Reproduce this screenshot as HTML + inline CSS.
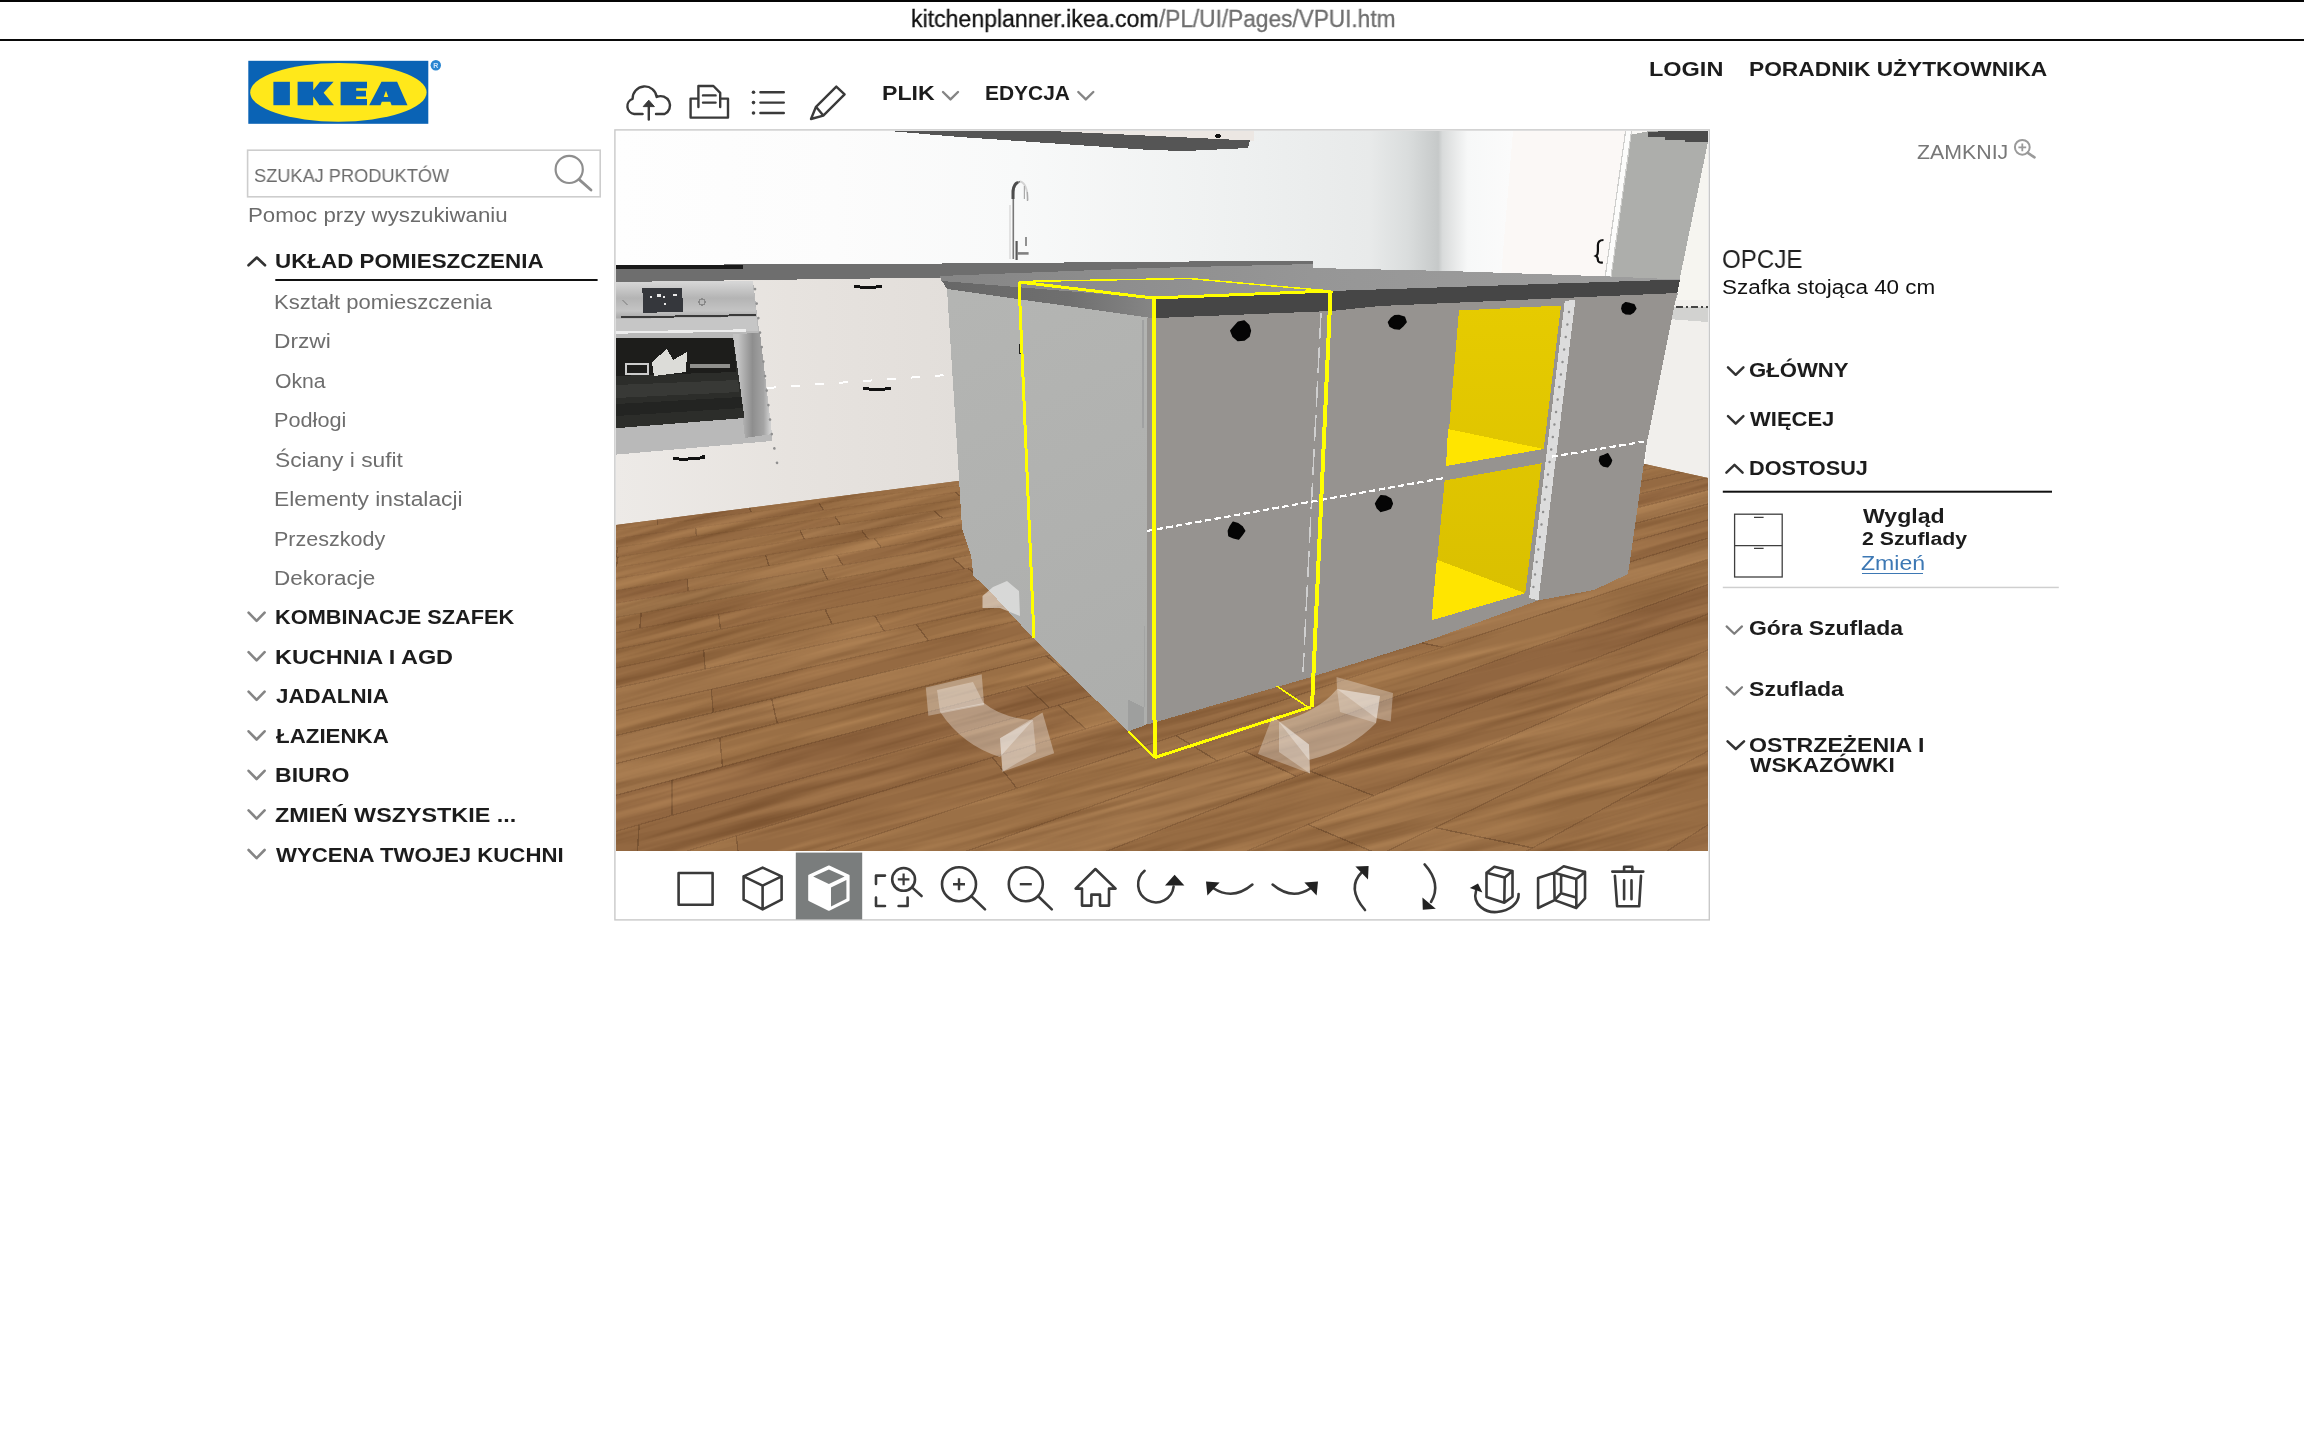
<!DOCTYPE html>
<html lang="pl"><head><meta charset="utf-8"><title>IKEA Home Planner</title>
<style>
html,body{margin:0;padding:0;background:#fff;}
body{width:2304px;height:1440px;position:relative;overflow:hidden;font-family:"Liberation Sans",sans-serif;}
.t{position:absolute;white-space:nowrap;line-height:1;transform-origin:0 0;display:block;will-change:transform;}
.abs{position:absolute;}
</style></head><body>

<div class="abs" style="left:0;top:0;width:2304px;height:1.9px;background:#050505"></div>
<div class="abs" style="left:0;top:39.4px;width:2304px;height:2px;background:#0a0a0a"></div>
<span class="t" style="left:910.8px;top:7.60px;font-size:23.5px;color:#111;-webkit-text-stroke:.3px #111;transform:scaleX(0.9819)">kitchenplanner.ikea.com</span>
<span class="t" style="left:1159.4px;top:7.60px;font-size:23.5px;color:#6e6e6e;-webkit-text-stroke:.3px #6e6e6e;transform:scaleX(0.9631)">/PL/UI/Pages/VPUI.htm</span>
<svg class="abs" style="left:0;top:0" width="2304" height="1440" viewBox="0 0 2304 1440">
<rect x="248.3" y="60.8" width="180" height="63" fill="#0a63b5"/>
<ellipse cx="338.4" cy="92.4" rx="88.2" ry="29.3" fill="#ffe81a"/>
<g fill="#0a63b5"><rect x="273.4" y="81.8" width="16.5" height="23.4"/><path d="M297.6,81.8 h15.6 v8.4 l6.8,-8.4 h13.6 l-10,11 l10.4,12.4 h-14.6 l-6.2,-8.6 v8.6 h-15.6 z"/><path d="M340.6,81.8 h26.4 v6.4 h-10.8 v2.6 h9.8 v5.6 h-9.8 v2.6 h10.8 v6.2 h-26.4 z"/><path d="M381.5,81.8 h15.6 l10.4,23.4 h-15.9 l-1.3,-3.4 h-8.5 l-1.3,3.4 h-11.3 z M386,90.8 l-2.3,6.2 h4.6 z"/></g>
<circle cx="435.8" cy="65.3" r="5.2" fill="#2a86d1"/><text x="435.8" y="68" font-size="7" text-anchor="middle" fill="#cfe6fa" font-family="Liberation Sans" font-weight="700">R</text>
<rect x="247.6" y="150.2" width="352.6" height="46.6" fill="#fff" stroke="#cdcdcd" stroke-width="1.6"/>
<circle cx="569.2" cy="169.4" r="13.6" fill="none" stroke="#8e8e8e" stroke-width="2.2"/><path d="M579,179.4 L591,190" stroke="#8e8e8e" stroke-width="2.8" stroke-linecap="round"/>
<path d="M248.5,265.3 L256.8,257.5 L265.0,265.3" fill="none" stroke="#333" stroke-width="2.6" stroke-linecap="round" stroke-linejoin="round"/>
<rect x="275.3" y="279" width="322.3" height="2" fill="#111"/>
<path d="M248.6,612.7 L256.6,620.9 L264.6,612.7" fill="none" stroke="#858585" stroke-width="2.6" stroke-linecap="round" stroke-linejoin="round"/>
<path d="M248.6,652.2 L256.6,660.4 L264.6,652.2" fill="none" stroke="#858585" stroke-width="2.6" stroke-linecap="round" stroke-linejoin="round"/>
<path d="M248.6,691.7 L256.6,699.9 L264.6,691.7" fill="none" stroke="#858585" stroke-width="2.6" stroke-linecap="round" stroke-linejoin="round"/>
<path d="M248.6,731.3 L256.6,739.5 L264.6,731.3" fill="none" stroke="#858585" stroke-width="2.6" stroke-linecap="round" stroke-linejoin="round"/>
<path d="M248.6,770.8 L256.6,779.0 L264.6,770.8" fill="none" stroke="#858585" stroke-width="2.6" stroke-linecap="round" stroke-linejoin="round"/>
<path d="M248.6,810.4 L256.6,818.6 L264.6,810.4" fill="none" stroke="#858585" stroke-width="2.6" stroke-linecap="round" stroke-linejoin="round"/>
<path d="M248.6,850.0 L256.6,858.2 L264.6,850.0" fill="none" stroke="#858585" stroke-width="2.6" stroke-linecap="round" stroke-linejoin="round"/>
<path d="M943.0,92.0 L950.5,99.4 L958.0,92.0" fill="none" stroke="#858585" stroke-width="2.4" stroke-linecap="round" stroke-linejoin="round"/>
<path d="M1078.3,92.0 L1085.8,99.4 L1093.3,92.0" fill="none" stroke="#858585" stroke-width="2.4" stroke-linecap="round" stroke-linejoin="round"/>
<path stroke="#3a3a3a" fill="none" stroke-width="2.4" stroke-linecap="round" stroke-linejoin="round" d="M642.6,114 H634.2 A7.8,7.8 0 0 1 632.6,98.9 A12.1,12.1 0 0 1 656.7,97 A8.6,8.6 0 0 1 664.6,114 H656"/>
<path stroke="#3a3a3a" fill="none" stroke-width="2.4" stroke-linecap="round" stroke-linejoin="round" d="M648.8,119.6 V103"/><path d="M643.2,106.6 L648.8,100.2 L654.4,106.6 Z" fill="#3a3a3a" stroke="#3a3a3a" stroke-width="1" stroke-linejoin="round"/>
<path stroke="#3a3a3a" fill="none" stroke-width="2.4" stroke-linecap="round" stroke-linejoin="round" d="M698.4,107 V86 h15 l6.8,6.8 V107 M690.6,98.6 h7.8 M720.2,98.6 h7.8 V117.6 H690.6 V98.6 M703,95.4 h12.6 M703,102.6 h12.6"/>
<path stroke="#3a3a3a" fill="none" stroke-width="2.4" stroke-linecap="round" stroke-linejoin="round" d="M760.4,92.2 h23.4 M760.4,102.6 h23.4 M760.4,113 h23.4"/>
<g fill="#3a3a3a"><circle cx="753.5" cy="92.2" r="1.8"/><circle cx="753.5" cy="102.6" r="1.8"/><circle cx="753.5" cy="113" r="1.8"/></g>
<path stroke="#3a3a3a" fill="none" stroke-width="2.4" stroke-linecap="round" stroke-linejoin="round" d="M836.3,86.6 L844.6,94.4 L823.3,115.6 L811,119 L816,106.8 Z M816,106.8 L823.3,115.6"/>
<circle cx="2022.3" cy="147.3" r="7.4" fill="none" stroke="#9a9a9a" stroke-width="2"/><path d="M2027.8,152.8 L2034.5,157.3" stroke="#9a9a9a" stroke-width="2.6" stroke-linecap="round"/><path d="M2018.4,147.3 h7.8 M2022.3,143.4 v7.8" stroke="#9a9a9a" stroke-width="1.8"/>
<path d="M1728.0,367.4 L1735.7,374.8 L1743.4,367.4" fill="none" stroke="#333" stroke-width="2.5" stroke-linecap="round" stroke-linejoin="round"/>
<path d="M1728.0,416.2 L1735.7,423.6 L1743.4,416.2" fill="none" stroke="#333" stroke-width="2.5" stroke-linecap="round" stroke-linejoin="round"/>
<path d="M1726.4,472.6 L1734.5,464.8 L1742.6,472.6" fill="none" stroke="#333" stroke-width="2.5" stroke-linecap="round" stroke-linejoin="round"/>
<rect x="1722.8" y="490.7" width="329.2" height="2" fill="#111"/>
<rect x="1722.8" y="586.7" width="336" height="1.5" fill="#cfcfcf"/>
<g stroke="#3f3f3f" fill="none" stroke-width="1.3"><rect x="1734.6" y="514.2" width="47.6" height="62.8"/><path d="M1734.6,545.6 h47.6 M1754,517.3 h9.6 M1754,548.4 h9.6"/></g>
<path d="M1726.6,626.4 L1734.3,633.8 L1742.0,626.4" fill="none" stroke="#7d7d7d" stroke-width="2.2" stroke-linecap="round" stroke-linejoin="round"/>
<path d="M1726.6,687.2 L1734.3,694.6 L1742.0,687.2" fill="none" stroke="#7d7d7d" stroke-width="2.2" stroke-linecap="round" stroke-linejoin="round"/>
<path d="M1727.6,741.4 L1735.8,749.0 L1744.0,741.4" fill="none" stroke="#333" stroke-width="2.6" stroke-linecap="round" stroke-linejoin="round"/>
<rect x="614.9" y="129.9" width="1094.4" height="790" fill="#fff" stroke="#c9c9c9" stroke-width="1.4"/>
</svg>
<span class="t" style="left:253.7px;top:166.11px;font-size:19.0px;font-weight:400;color:#6b6b6b;transform:scaleX(0.9581);">SZUKAJ PRODUKTÓW</span>
<span class="t" style="left:247.5px;top:204.77px;font-size:20.0px;font-weight:400;color:#6b6b6b;transform:scaleX(1.1122);">Pomoc przy wyszukiwaniu</span>
<span class="t" style="left:275.2px;top:251.99px;font-size:19.5px;font-weight:700;color:#1c1c1c;transform:scaleX(1.1476);">UKŁAD POMIESZCZENIA</span>
<span class="t" style="left:274.0px;top:291.57px;font-size:20.0px;font-weight:400;color:#6e6e6e;transform:scaleX(1.1020);">Kształt pomieszczenia</span>
<span class="t" style="left:273.9px;top:331.07px;font-size:20.0px;font-weight:400;color:#6e6e6e;transform:scaleX(1.1362);">Drzwi</span>
<span class="t" style="left:275.1px;top:370.57px;font-size:20.0px;font-weight:400;color:#6e6e6e;transform:scaleX(1.0596);">Okna</span>
<span class="t" style="left:274.0px;top:410.07px;font-size:20.0px;font-weight:400;color:#6e6e6e;transform:scaleX(1.0844);">Podłogi</span>
<span class="t" style="left:275.1px;top:449.57px;font-size:20.0px;font-weight:400;color:#6e6e6e;transform:scaleX(1.1396);">Ściany i sufit</span>
<span class="t" style="left:273.9px;top:489.07px;font-size:20.0px;font-weight:400;color:#6e6e6e;transform:scaleX(1.1387);">Elementy instalacji</span>
<span class="t" style="left:274.0px;top:528.57px;font-size:20.0px;font-weight:400;color:#6e6e6e;transform:scaleX(1.0762);">Przeszkody</span>
<span class="t" style="left:274.0px;top:568.07px;font-size:20.0px;font-weight:400;color:#6e6e6e;transform:scaleX(1.1241);">Dekoracje</span>
<span class="t" style="left:275.1px;top:608.29px;font-size:19.5px;font-weight:700;color:#1c1c1c;transform:scaleX(1.1155);">KOMBINACJE SZAFEK</span>
<span class="t" style="left:275.0px;top:647.79px;font-size:19.5px;font-weight:700;color:#1c1c1c;transform:scaleX(1.2027);">KUCHNIA I AGD</span>
<span class="t" style="left:276.2px;top:687.29px;font-size:19.5px;font-weight:700;color:#1c1c1c;transform:scaleX(1.1449);">JADALNIA</span>
<span class="t" style="left:276.2px;top:726.89px;font-size:19.5px;font-weight:700;color:#1c1c1c;transform:scaleX(1.1449);">ŁAZIENKA</span>
<span class="t" style="left:275.0px;top:766.39px;font-size:19.5px;font-weight:700;color:#1c1c1c;transform:scaleX(1.1836);">BIURO</span>
<span class="t" style="left:275.0px;top:805.99px;font-size:19.5px;font-weight:700;color:#1c1c1c;transform:scaleX(1.1970);">ZMIEŃ WSZYSTKIE ...</span>
<span class="t" style="left:276.2px;top:845.59px;font-size:19.5px;font-weight:700;color:#1c1c1c;transform:scaleX(1.1377);">WYCENA TWOJEJ KUCHNI</span>
<span class="t" style="left:881.8px;top:84.39px;font-size:19.5px;font-weight:700;color:#1c1c1c;transform:scaleX(1.1860);">PLIK</span>
<span class="t" style="left:985.1px;top:84.39px;font-size:19.5px;font-weight:700;color:#1c1c1c;transform:scaleX(1.0744);">EDYCJA</span>
<span class="t" style="left:1648.8px;top:59.07px;font-size:20.0px;font-weight:700;color:#1c1c1c;transform:scaleX(1.1738);">LOGIN</span>
<span class="t" style="left:1749.4px;top:59.07px;font-size:20.0px;font-weight:700;color:#1c1c1c;transform:scaleX(1.1375);">PORADNIK UŻYTKOWNIKA</span>
<span class="t" style="left:1916.6px;top:143.39px;font-size:19.5px;font-weight:400;color:#777;transform:scaleX(1.0938);">ZAMKNIJ</span>
<span class="t" style="left:1722.3px;top:246.61px;font-size:25.5px;font-weight:400;color:#1f1f1f;transform:scaleX(0.9470);">OPCJE</span>
<span class="t" style="left:1722.1px;top:276.57px;font-size:20.0px;font-weight:400;color:#111;transform:scaleX(1.1218);">Szafka stojąca 40 cm</span>
<span class="t" style="left:1749.3px;top:361.29px;font-size:19.5px;font-weight:700;color:#1c1c1c;transform:scaleX(1.1349);">GŁÓWNY</span>
<span class="t" style="left:1750.4px;top:410.09px;font-size:19.5px;font-weight:700;color:#1c1c1c;transform:scaleX(1.1284);">WIĘCEJ</span>
<span class="t" style="left:1749.3px;top:458.59px;font-size:19.5px;font-weight:700;color:#1c1c1c;transform:scaleX(1.1124);">DOSTOSUJ</span>
<span class="t" style="left:1862.7px;top:507.39px;font-size:19.5px;font-weight:700;color:#1c1c1c;transform:scaleX(1.1824);">Wygląd</span>
<span class="t" style="left:1861.5px;top:530.78px;font-size:17.5px;font-weight:700;color:#1c1c1c;transform:scaleX(1.2141);">2 Szuflady</span>
<span class="t" style="left:1860.5px;top:554.09px;font-size:19.5px;font-weight:400;color:#3d78b4;transform:scaleX(1.1827);">Zmień</span>
<span class="t" style="left:1749.1px;top:619.19px;font-size:19.5px;font-weight:700;color:#1c1c1c;transform:scaleX(1.1754);">Góra Szuflada</span>
<span class="t" style="left:1749.1px;top:679.99px;font-size:19.5px;font-weight:700;color:#1c1c1c;transform:scaleX(1.1835);">Szuflada</span>
<span class="t" style="left:1749.1px;top:735.89px;font-size:19.5px;font-weight:700;color:#1c1c1c;transform:scaleX(1.1870);">OSTRZEŻENIA I</span>
<span class="t" style="left:1750.3px;top:755.79px;font-size:19.5px;font-weight:700;color:#1c1c1c;transform:scaleX(1.1621);">WSKAZÓWKI</span>
<div class="abs" style="left:1861.7px;top:573px;width:61.5px;height:1.4px;background:#3d78b4"></div>
<svg style="position:absolute;left:616px;top:131px" width="1092" height="720" viewBox="616 131 1092 720" shape-rendering="crispEdges">
<defs>
<linearGradient id="wallg" x1="616" y1="0" x2="1708" y2="0" gradientUnits="userSpaceOnUse">
<stop offset="0" stop-color="#fefefe"/><stop offset=".2" stop-color="#fcfcfc"/><stop offset=".37" stop-color="#f8f9f9"/><stop offset=".535" stop-color="#f0f2f2"/><stop offset=".69" stop-color="#e8eaea"/><stop offset=".725" stop-color="#dadddd"/><stop offset=".753" stop-color="#c6c9c9"/><stop offset=".757" stop-color="#d9dbdb"/><stop offset=".78" stop-color="#f7f8f8"/><stop offset=".82" stop-color="#fbfbfb"/><stop offset="1" stop-color="#f8f6f2"/></linearGradient>
<linearGradient id="cabg" x1="616" y1="0" x2="960" y2="0" gradientUnits="userSpaceOnUse"><stop offset="0" stop-color="#edeae7"/><stop offset=".5" stop-color="#e7e3df"/><stop offset="1" stop-color="#e2deda"/></linearGradient>
<linearGradient id="leftface" x1="950" y1="300" x2="1150" y2="700" gradientUnits="userSpaceOnUse"><stop offset="0" stop-color="#b4b5b3"/><stop offset="1" stop-color="#adaeac"/></linearGradient>
<linearGradient id="lband" x1="942" y1="0" x2="1152" y2="0" gradientUnits="userSpaceOnUse"><stop offset="0" stop-color="#676767"/><stop offset=".6" stop-color="#6f6f6f"/><stop offset="1" stop-color="#858585"/></linearGradient>
<linearGradient id="topface" x1="942" y1="0" x2="1680" y2="0" gradientUnits="userSpaceOnUse"><stop offset="0" stop-color="#868686"/><stop offset=".5" stop-color="#969696"/><stop offset="1" stop-color="#9e9e9e"/></linearGradient>
<linearGradient id="ovenp" x1="0" y1="282" x2="0" y2="318" gradientUnits="userSpaceOnUse"><stop offset="0" stop-color="#d6d6d6"/><stop offset=".45" stop-color="#b4b4b4"/><stop offset=".8" stop-color="#c4c4c4"/><stop offset="1" stop-color="#a8a8a8"/></linearGradient>
<linearGradient id="ovenf" x1="738" y1="0" x2="770" y2="0" gradientUnits="userSpaceOnUse"><stop offset="0" stop-color="#c4c4c4"/><stop offset=".45" stop-color="#8e8e8e"/><stop offset=".8" stop-color="#a4a4a4"/><stop offset="1" stop-color="#cfcfcf"/></linearGradient>
<linearGradient id="ydark" x1="0" y1="305" x2="0" y2="620" gradientUnits="userSpaceOnUse"><stop offset="0" stop-color="#e6cb00"/><stop offset="1" stop-color="#d9bf00"/></linearGradient>
<filter id="grainD" x="0" y="0" width="100%" height="100%" color-interpolation-filters="sRGB"><feTurbulence type="fractalNoise" baseFrequency="0.005 0.11" numOctaves="3" seed="4"/><feColorMatrix type="matrix" values="0 0 0 0 0.30  0 0 0 0 0.16  0 0 0 0 0.05  0.75 0 0 0 -0.335"/></filter>
<filter id="grainL" x="0" y="0" width="100%" height="100%" color-interpolation-filters="sRGB"><feTurbulence type="fractalNoise" baseFrequency="0.004 0.09" numOctaves="3" seed="9"/><feColorMatrix type="matrix" values="0 0 0 0 0.86  0 0 0 0 0.66  0 0 0 0 0.44  0 0.75 0 0 -0.34"/></filter>
<clipPath id="floorclip"><polygon points="616,525 958,481 1000,480 1640,463 1708,478 1708,851 616,851"/></clipPath>
</defs>
<rect x="616" y="131" width="1092" height="720" fill="url(#wallg)"/>
<!-- top wall-cabinet strip -->
<polygon points="1000,131 1254,131 1254,141 1000,134" fill="#ece7e3"/>
<polygon points="889,131 1050,131 1250,140.5 1248,148 1186,151 1150,150 960,137" fill="#555"/>
<ellipse cx="1218" cy="136" rx="3" ry="2" fill="#111"/>
<!-- right tall cabinet -->
<polygon points="1513,131 1631.5,131 1611,277 1501,277" fill="#fbf8f6"/>
<polygon points="1631.5,134.5 1650,131 1708,131 1708,141.8 1679.6,279.6 1611,276.7" fill="#adaeab"/>
<polygon points="1625.6,131 1631.5,131 1611,276.7 1605.2,276.7" fill="#fcfcfb"/>
<path d="M1625.6,131 L1605.2,276.7 M1631.5,131 L1611,276.7" stroke="#cfcfcd" stroke-width="1.2" fill="none"/>
<polygon points="1647.5,132.3 1665,131 1708,131 1708,141.8 1685.4,141.8 1685.4,139.6 1665,139.6 1665,137.4 1647.5,137.4" fill="#4b4b4b"/>
<polygon points="1708,141.8 1708,302 1676,302 1679.6,279.6" fill="#f6f5f0"/>
<path d="M1603.5,240 q-6,0 -5.6,6 v5 q0,4 -2,5 q2,1 2,4 q0,3 5,2.5" fill="none" stroke="#111" stroke-width="2.2" shape-rendering="auto"/>
<!-- faucet -->
<g fill="none" shape-rendering="auto">
<path d="M1010,259 V205" stroke="#dcdcdc" stroke-width="1.6"/>
<path d="M1013.3,259 V196 q0,-13 7,-14.5" stroke="#787878" stroke-width="1.6"/>
<path d="M1013,199 V191 q0.6,-7 5,-8.6" stroke="#4d4d4d" stroke-width="3"/>
<path d="M1020,181.5 q7,1 8,19" stroke="#d4d4d4" stroke-width="2"/>
<path d="M1024.4,186 v13 M1027.4,192 v9" stroke="#aaa" stroke-width="1.2"/>
<path d="M1016.6,241 V260" stroke="#5a5a5a" stroke-width="2.2"/>
<path d="M1017,253.4 h11.6" stroke="#808080" stroke-width="2.6"/>
<path d="M1026,237 v9" stroke="#777" stroke-width="1.6"/>
</g>
<!-- white base cabinets -->
<polygon points="616,282 960,276 962,481 616,526" fill="url(#cabg)"/>
<polygon points="1640,300 1708,300 1708,478 1646,465" fill="#f1efec"/>
<polygon points="1668,306.5 1708,306.5 1708,322 1668,319" fill="#d2d2d0"/><polygon points="1668,292.7 1678.1,292.7 1668.6,322 1660,345" fill="#a6a6a4"/>
<!-- oven -->
<polygon points="616,281.3 753,281.3 772,434 772,441 616,454.6" fill="#b9b9b9"/>
<polygon points="616,281.3 752.5,281.3 756.5,316 616,318" fill="url(#ovenp)"/>
<polygon points="642.3,288.5 682.3,287.5 682.8,311.5 643.5,313" fill="#35373c"/>
<g fill="#e8e8e8"><rect x="650" y="296" width="2" height="2"/><rect x="657" y="294" width="4" height="3"/><rect x="663" y="296" width="2" height="2"/><rect x="673" y="294" width="4" height="2"/><rect x="664" y="303" width="2" height="2"/></g>
<circle cx="702" cy="302" r="3" fill="none" stroke="#888" stroke-width="1.2"/>
<path d="M623,300 l4,5" stroke="#999" stroke-width="1.5"/>
<path d="M621,317.5 L756,315" stroke="#3a3a3a" stroke-width="2"/>
<polygon points="616,319 756.5,317 758,331 616,332" fill="#c6c6c6"/>
<path d="M616,332.5 L746,330.5" stroke="#ededed" stroke-width="2.4"/>
<polygon points="733,334 760,333 772,434 745,438" fill="url(#ovenf)"/>
<polygon points="616,338 733.3,338 744.5,418 616,428.2" fill="#2c2d2a"/>
<polygon points="616,338 733.3,338 736.5,372 616,376" fill="#1d1d1b"/>
<polygon points="616,385 738,380 739.5,392 616,398" fill="#383936"/>
<polygon points="616,404 741,397 742.5,408 616,416" fill="#232422"/>
<polygon points="652,362 667,349 673,360 687,352 686,372 654,376" fill="#dcdcd8"/>
<rect x="626" y="364" width="22" height="10" fill="none" stroke="#ccc" stroke-width="1.2"/>
<path d="M690,366 h40" stroke="#8f8f8c" stroke-width="4"/>
<!-- handles -->
<path d="M854,286 q14,3 28,0" stroke="#111" stroke-width="3" fill="none"/>
<path d="M863,388 q14,3 28,0" stroke="#111" stroke-width="3" fill="none"/>
<path d="M673,458.6 q16,1.5 30,-1 v-3" stroke="#111" stroke-width="3" fill="none"/>
<path d="M767,388 L947,375" stroke="#fff" stroke-width="2" stroke-dasharray="9 15"/>
<path d="M755,289 L771.7,434 L779.6,477" stroke="#8f8f8f" stroke-width="2.6" stroke-linecap="round" stroke-dasharray="0.1 14.5" fill="none" shape-rendering="auto"/>
<!-- back counter -->
<polygon points="616,265 942,263.5 1313,260.5 1313,266 1150,270 942,277.5 616,282" fill="#6e6e6e"/>
<rect x="616" y="265.4" width="127" height="3.6" fill="#1a1a1a"/>
<!-- floor -->
<g clip-path="url(#floorclip)">
<rect x="616" y="460" width="1092" height="400" fill="#986d44"/>
<polygon points="480.6,524.0 648.8,503.8 648.1,510.8 475.3,532.1" fill="#9d7248"/>
<line x1="480.6" y1="524.0" x2="475.3" y2="532.1" stroke="#5f3f26" stroke-opacity=".5" stroke-width="1.4"/>
<polygon points="648.8,503.8 873.6,476.9 878.9,482.4 648.1,510.8" fill="#966b43"/>
<line x1="648.8" y1="503.8" x2="648.1" y2="510.8" stroke="#5f3f26" stroke-opacity=".5" stroke-width="1.4"/>
<polygon points="873.6,476.9 1027.3,458.6 1036.6,462.9 878.9,482.4" fill="#916640"/>
<polygon points="1027.3,458.6 1187.6,439.4 1200.9,442.7 1036.6,462.9" fill="#a0754b"/>
<polygon points="431.0,537.5 600.8,516.6 598.7,524.4 424.1,546.5" fill="#9e7349"/>
<line x1="431.0" y1="537.5" x2="424.1" y2="546.5" stroke="#5f3f26" stroke-opacity=".5" stroke-width="1.4"/>
<polygon points="600.8,516.6 826.8,488.8 831.0,494.9 598.7,524.4" fill="#9a6f45"/>
<line x1="600.8" y1="516.6" x2="598.7" y2="524.4" stroke="#5f3f26" stroke-opacity=".5" stroke-width="1.4"/>
<polygon points="826.8,488.8 1011.9,466.0 1021.2,470.7 831.0,494.9" fill="#997047"/>
<line x1="826.8" y1="488.8" x2="831.0" y2="494.9" stroke="#5f3f26" stroke-opacity=".5" stroke-width="1.4"/>
<polygon points="1011.9,466.0 1191.0,443.9 1204.9,447.4 1021.2,470.7" fill="#966b43"/>
<polygon points="414.2,547.8 531.7,532.9 527.6,541.7 406.6,557.5" fill="#976c43"/>
<line x1="414.2" y1="547.8" x2="406.6" y2="557.5" stroke="#5f3f26" stroke-opacity=".5" stroke-width="1.4"/>
<polygon points="531.7,532.9 657.8,516.9 657.3,524.7 527.6,541.7" fill="#966b43"/>
<line x1="531.7" y1="532.9" x2="527.6" y2="541.7" stroke="#5f3f26" stroke-opacity=".5" stroke-width="1.4"/>
<polygon points="657.8,516.9 749.0,505.3 751.1,512.4 657.3,524.7" fill="#916640"/>
<line x1="657.8" y1="516.9" x2="657.3" y2="524.7" stroke="#5f3f26" stroke-opacity=".5" stroke-width="1.4"/>
<polygon points="749.0,505.3 911.7,484.6 918.4,490.4 751.1,512.4" fill="#976c43"/>
<line x1="749.0" y1="505.3" x2="751.1" y2="512.4" stroke="#5f3f26" stroke-opacity=".5" stroke-width="1.4"/>
<polygon points="911.7,484.6 1070.6,464.4 1081.7,469.0 918.4,490.4" fill="#a0754b"/>
<polygon points="1070.6,464.4 1295.8,435.8 1312.9,438.7 1081.7,469.0" fill="#9b7046"/>
<polygon points="561.3,537.2 819.3,503.4 823.6,510.4 557.9,546.3" fill="#966b43"/>
<line x1="561.3" y1="537.2" x2="557.9" y2="546.3" stroke="#5f3f26" stroke-opacity=".5" stroke-width="1.4"/>
<polygon points="819.3,503.4 1051.1,473.1 1062.1,478.1 823.6,510.4" fill="#9b7046"/>
<line x1="819.3" y1="503.4" x2="823.6" y2="510.4" stroke="#5f3f26" stroke-opacity=".5" stroke-width="1.4"/>
<polygon points="1051.1,473.1 1260.4,445.6 1277.3,449.0 1062.1,478.1" fill="#966b43"/>
<polygon points="536.2,549.3 695.7,527.7 696.4,536.2 531.8,559.2" fill="#956a42"/>
<line x1="536.2" y1="549.3" x2="531.8" y2="559.2" stroke="#5f3f26" stroke-opacity=".5" stroke-width="1.4"/>
<polygon points="695.7,527.7 955.5,492.5 964.1,498.7 696.4,536.2" fill="#9b7046"/>
<line x1="695.7" y1="527.7" x2="696.4" y2="536.2" stroke="#5f3f26" stroke-opacity=".5" stroke-width="1.4"/>
<polygon points="955.5,492.5 1196.0,460.0 1211.7,464.1 964.1,498.7" fill="#9b7046"/>
<line x1="955.5" y1="492.5" x2="964.1" y2="498.7" stroke="#5f3f26" stroke-opacity=".5" stroke-width="1.4"/>
<polygon points="1196.0,460.0 1288.1,447.5 1306.3,450.8 1211.7,464.1" fill="#966b43"/>
<polygon points="487.0,565.5 617.8,547.2 616.0,557.1 480.9,576.6" fill="#956a42"/>
<line x1="487.0" y1="565.5" x2="480.9" y2="576.6" stroke="#5f3f26" stroke-opacity=".5" stroke-width="1.4"/>
<polygon points="617.8,547.2 835.0,516.8 840.1,524.6 616.0,557.1" fill="#966b43"/>
<line x1="617.8" y1="547.2" x2="616.0" y2="557.1" stroke="#5f3f26" stroke-opacity=".5" stroke-width="1.4"/>
<polygon points="835.0,516.8 990.9,495.0 1000.9,501.3 840.1,524.6" fill="#9a6f45"/>
<line x1="835.0" y1="516.8" x2="840.1" y2="524.6" stroke="#5f3f26" stroke-opacity=".5" stroke-width="1.4"/>
<polygon points="990.9,495.0 1142.3,473.8 1156.9,478.7 1000.9,501.3" fill="#9a6f45"/>
<line x1="990.9" y1="495.0" x2="1000.9" y2="501.3" stroke="#5f3f26" stroke-opacity=".5" stroke-width="1.4"/>
<polygon points="1142.3,473.8 1240.0,460.1 1257.6,464.1 1156.9,478.7" fill="#916640"/>
<polygon points="1240.0,460.1 1409.5,436.4 1431.9,438.9 1257.6,464.1" fill="#916640"/>
<polygon points="415.2,586.2 618.1,556.8 616.2,567.4 406.4,598.8" fill="#936841"/>
<line x1="415.2" y1="586.2" x2="406.4" y2="598.8" stroke="#5f3f26" stroke-opacity=".5" stroke-width="1.4"/>
<polygon points="618.1,556.8 800.1,530.4 804.3,539.1 616.2,567.4" fill="#9a6f45"/>
<line x1="618.1" y1="556.8" x2="616.2" y2="567.4" stroke="#5f3f26" stroke-opacity=".5" stroke-width="1.4"/>
<polygon points="800.1,530.4 934.0,511.0 942.6,518.3 804.3,539.1" fill="#a0754b"/>
<line x1="800.1" y1="530.4" x2="804.3" y2="539.1" stroke="#5f3f26" stroke-opacity=".5" stroke-width="1.4"/>
<polygon points="934.0,511.0 1169.5,476.9 1185.6,481.9 942.6,518.3" fill="#9e7349"/>
<line x1="934.0" y1="511.0" x2="942.6" y2="518.3" stroke="#5f3f26" stroke-opacity=".5" stroke-width="1.4"/>
<polygon points="1169.5,476.9 1292.3,459.1 1312.2,462.8 1185.6,481.9" fill="#a0754b"/>
<polygon points="1292.3,459.1 1511.6,427.3 1537.9,429.0 1312.2,462.8" fill="#9a6f45"/>
<polygon points="416.1,597.4 594.3,570.6 591.4,582.3 407.0,611.0" fill="#9e7349"/>
<line x1="416.1" y1="597.4" x2="407.0" y2="611.0" stroke="#5f3f26" stroke-opacity=".5" stroke-width="1.4"/>
<polygon points="594.3,570.6 861.8,530.5 868.2,539.2 591.4,582.3" fill="#986d44"/>
<line x1="594.3" y1="570.6" x2="591.4" y2="582.3" stroke="#5f3f26" stroke-opacity=".5" stroke-width="1.4"/>
<polygon points="861.8,530.5 1088.1,496.5 1102.2,502.7 868.2,539.2" fill="#a0754b"/>
<line x1="861.8" y1="530.5" x2="868.2" y2="539.2" stroke="#5f3f26" stroke-opacity=".5" stroke-width="1.4"/>
<polygon points="1088.1,496.5 1209.4,478.3 1227.4,483.2 1102.2,502.7" fill="#9b7046"/>
<line x1="1088.1" y1="496.5" x2="1102.2" y2="502.7" stroke="#5f3f26" stroke-opacity=".5" stroke-width="1.4"/>
<polygon points="1209.4,478.3 1503.6,434.1 1530.8,435.9 1227.4,483.2" fill="#966b43"/>
<polygon points="384.7,614.5 532.1,591.6 526.8,604.9 374.0,629.6" fill="#9d7248"/>
<line x1="384.7" y1="614.5" x2="374.0" y2="629.6" stroke="#5f3f26" stroke-opacity=".5" stroke-width="1.4"/>
<polygon points="532.1,591.6 765.6,555.2 768.9,565.7 526.8,604.9" fill="#9b7046"/>
<line x1="532.1" y1="591.6" x2="526.8" y2="604.9" stroke="#5f3f26" stroke-opacity=".5" stroke-width="1.4"/>
<polygon points="765.6,555.2 874.2,538.2 881.3,547.5 768.9,565.7" fill="#9d7248"/>
<line x1="765.6" y1="555.2" x2="768.9" y2="565.7" stroke="#5f3f26" stroke-opacity=".5" stroke-width="1.4"/>
<polygon points="874.2,538.2 1053.9,510.2 1067.4,517.3 881.3,547.5" fill="#976c43"/>
<line x1="874.2" y1="538.2" x2="881.3" y2="547.5" stroke="#5f3f26" stroke-opacity=".5" stroke-width="1.4"/>
<polygon points="1053.9,510.2 1284.8,474.3 1306.2,478.7 1067.4,517.3" fill="#9d7248"/>
<line x1="1053.9" y1="510.2" x2="1067.4" y2="517.3" stroke="#5f3f26" stroke-opacity=".5" stroke-width="1.4"/>
<polygon points="1284.8,474.3 1416.1,453.8 1441.7,456.7 1306.2,478.7" fill="#a0754b"/>
<polygon points="1416.1,453.8 1640.3,418.9 1672.8,419.3 1441.7,456.7" fill="#936841"/>
<polygon points="525.9,605.0 687.5,578.9 688.0,591.2 520.2,619.5" fill="#916640"/>
<line x1="525.9" y1="605.0" x2="520.2" y2="619.5" stroke="#5f3f26" stroke-opacity=".5" stroke-width="1.4"/>
<polygon points="687.5,578.9 836.7,554.7 842.8,565.2 688.0,591.2" fill="#9e7349"/>
<line x1="687.5" y1="578.9" x2="688.0" y2="591.2" stroke="#5f3f26" stroke-opacity=".5" stroke-width="1.4"/>
<polygon points="836.7,554.7 1100.8,511.9 1116.7,519.0 842.8,565.2" fill="#966b43"/>
<line x1="836.7" y1="554.7" x2="842.8" y2="565.2" stroke="#5f3f26" stroke-opacity=".5" stroke-width="1.4"/>
<polygon points="1100.8,511.9 1407.3,462.3 1433.9,465.5 1116.7,519.0" fill="#9b7046"/>
<line x1="1100.8" y1="511.9" x2="1116.7" y2="519.0" stroke="#5f3f26" stroke-opacity=".5" stroke-width="1.4"/>
<polygon points="1407.3,462.3 1558.3,437.8 1589.7,439.2 1433.9,465.5" fill="#9a6f45"/>
<polygon points="376.8,643.7 499.0,623.1 492.0,639.2 364.8,661.6" fill="#a0754b"/>
<line x1="376.8" y1="643.7" x2="364.8" y2="661.6" stroke="#5f3f26" stroke-opacity=".5" stroke-width="1.4"/>
<polygon points="499.0,623.1 822.1,568.6 827.9,580.2 492.0,639.2" fill="#997047"/>
<line x1="499.0" y1="623.1" x2="492.0" y2="639.2" stroke="#5f3f26" stroke-opacity=".5" stroke-width="1.4"/>
<polygon points="822.1,568.6 987.9,540.7 1000.1,549.9 827.9,580.2" fill="#9d7248"/>
<line x1="822.1" y1="568.6" x2="827.9" y2="580.2" stroke="#5f3f26" stroke-opacity=".5" stroke-width="1.4"/>
<polygon points="987.9,540.7 1255.2,495.6 1277.5,501.2 1000.1,549.9" fill="#956a42"/>
<line x1="987.9" y1="540.7" x2="1000.1" y2="549.9" stroke="#5f3f26" stroke-opacity=".5" stroke-width="1.4"/>
<polygon points="1255.2,495.6 1425.2,467.0 1453.6,470.2 1277.5,501.2" fill="#966b43"/>
<polygon points="1425.2,467.0 1719.1,417.4 1757.1,416.9 1453.6,470.2" fill="#9d7248"/>
<polygon points="396.0,656.1 641.2,613.0 639.8,628.3 384.3,675.3" fill="#9a6f45"/>
<line x1="396.0" y1="656.1" x2="384.3" y2="675.3" stroke="#5f3f26" stroke-opacity=".5" stroke-width="1.4"/>
<polygon points="641.2,613.0 952.9,558.2 964.3,568.8 639.8,628.3" fill="#966b43"/>
<line x1="641.2" y1="613.0" x2="639.8" y2="628.3" stroke="#5f3f26" stroke-opacity=".5" stroke-width="1.4"/>
<polygon points="952.9,558.2 1210.8,512.9 1232.5,519.5 964.3,568.8" fill="#a0754b"/>
<line x1="952.9" y1="558.2" x2="964.3" y2="568.8" stroke="#5f3f26" stroke-opacity=".5" stroke-width="1.4"/>
<polygon points="1210.8,512.9 1393.2,480.8 1421.8,484.8 1232.5,519.5" fill="#9b7046"/>
<line x1="1210.8" y1="512.9" x2="1232.5" y2="519.5" stroke="#5f3f26" stroke-opacity=".5" stroke-width="1.4"/>
<polygon points="1393.2,480.8 1720.6,423.3 1760.6,422.6 1421.8,484.8" fill="#916640"/>
<polygon points="393.5,673.6 528.3,648.8 521.8,667.5 381.1,694.6" fill="#986d44"/>
<line x1="393.5" y1="673.6" x2="381.1" y2="694.6" stroke="#5f3f26" stroke-opacity=".5" stroke-width="1.4"/>
<polygon points="528.3,648.8 718.6,613.9 720.5,629.4 521.8,667.5" fill="#976c43"/>
<line x1="528.3" y1="648.8" x2="521.8" y2="667.5" stroke="#5f3f26" stroke-opacity=".5" stroke-width="1.4"/>
<polygon points="718.6,613.9 967.9,568.1 980.6,579.4 720.5,629.4" fill="#956a42"/>
<line x1="718.6" y1="613.9" x2="720.5" y2="629.4" stroke="#5f3f26" stroke-opacity=".5" stroke-width="1.4"/>
<polygon points="967.9,568.1 1322.0,503.1 1349.3,508.5 980.6,579.4" fill="#956a42"/>
<line x1="967.9" y1="568.1" x2="980.6" y2="579.4" stroke="#5f3f26" stroke-opacity=".5" stroke-width="1.4"/>
<polygon points="1322.0,503.1 1467.9,476.3 1500.9,479.4 1349.3,508.5" fill="#997047"/>
<polygon points="1467.9,476.3 1624.9,447.5 1663.7,448.1 1500.9,479.4" fill="#9e7349"/>
<polygon points="550.1,662.1 825.2,609.2 832.1,624.3 544.3,682.2" fill="#9a6f45"/>
<line x1="550.1" y1="662.1" x2="544.3" y2="682.2" stroke="#5f3f26" stroke-opacity=".5" stroke-width="1.4"/>
<polygon points="825.2,609.2 1183.0,540.5 1205.8,548.9 832.1,624.3" fill="#9a6f45"/>
<line x1="825.2" y1="609.2" x2="832.1" y2="624.3" stroke="#5f3f26" stroke-opacity=".5" stroke-width="1.4"/>
<polygon points="1183.0,540.5 1430.1,493.0 1463.3,497.0 1205.8,548.9" fill="#9e7349"/>
<line x1="1183.0" y1="540.5" x2="1205.8" y2="548.9" stroke="#5f3f26" stroke-opacity=".5" stroke-width="1.4"/>
<polygon points="1430.1,493.0 1648.5,451.1 1690.3,451.3 1463.3,497.0" fill="#976c43"/>
<polygon points="334.8,724.5 487.7,693.7 478.6,717.2 318.2,751.2" fill="#956a42"/>
<line x1="334.8" y1="724.5" x2="318.2" y2="751.2" stroke="#5f3f26" stroke-opacity=".5" stroke-width="1.4"/>
<polygon points="487.7,693.7 703.7,650.1 705.1,669.2 478.6,717.2" fill="#956a42"/>
<line x1="487.7" y1="693.7" x2="478.6" y2="717.2" stroke="#5f3f26" stroke-opacity=".5" stroke-width="1.4"/>
<polygon points="703.7,650.1 874.7,615.7 884.2,631.2 705.1,669.2" fill="#9d7248"/>
<line x1="703.7" y1="650.1" x2="705.1" y2="669.2" stroke="#5f3f26" stroke-opacity=".5" stroke-width="1.4"/>
<polygon points="874.7,615.7 1029.0,584.6 1045.9,596.9 884.2,631.2" fill="#986d44"/>
<line x1="874.7" y1="615.7" x2="884.2" y2="631.2" stroke="#5f3f26" stroke-opacity=".5" stroke-width="1.4"/>
<polygon points="1029.0,584.6 1282.1,533.6 1310.7,540.8 1045.9,596.9" fill="#986d44"/>
<line x1="1029.0" y1="584.6" x2="1045.9" y2="596.9" stroke="#5f3f26" stroke-opacity=".5" stroke-width="1.4"/>
<polygon points="1282.1,533.6 1513.4,486.9 1552.0,489.7 1310.7,540.8" fill="#966b43"/>
<line x1="1282.1" y1="533.6" x2="1310.7" y2="540.8" stroke="#5f3f26" stroke-opacity=".5" stroke-width="1.4"/>
<polygon points="1513.4,486.9 1661.0,457.2 1705.7,457.1 1552.0,489.7" fill="#976c43"/>
<polygon points="1661.0,457.2 2041.9,380.4 2098.7,373.9 1705.7,457.1" fill="#916640"/>
<polygon points="537.2,704.7 916.3,624.4 928.5,640.7 530.1,729.7" fill="#9e7349"/>
<line x1="537.2" y1="704.7" x2="530.1" y2="729.7" stroke="#5f3f26" stroke-opacity=".5" stroke-width="1.4"/>
<polygon points="916.3,624.4 1172.2,570.2 1197.1,580.7 928.5,640.7" fill="#9a6f45"/>
<line x1="916.3" y1="624.4" x2="928.5" y2="640.7" stroke="#5f3f26" stroke-opacity=".5" stroke-width="1.4"/>
<polygon points="1172.2,570.2 1530.0,494.4 1571.8,497.0 1197.1,580.7" fill="#9e7349"/>
<line x1="1172.2" y1="570.2" x2="1197.1" y2="580.7" stroke="#5f3f26" stroke-opacity=".5" stroke-width="1.4"/>
<polygon points="1530.0,494.4 1909.1,414.0 1965.9,409.0 1571.8,497.0" fill="#976c43"/>
<polygon points="394.8,759.9 711.3,689.2 713.2,712.5 379.5,791.4" fill="#9b7046"/>
<line x1="394.8" y1="759.9" x2="379.5" y2="791.4" stroke="#5f3f26" stroke-opacity=".5" stroke-width="1.4"/>
<polygon points="711.3,689.2 1035.4,616.8 1054.6,631.9 713.2,712.5" fill="#956a42"/>
<line x1="711.3" y1="689.2" x2="713.2" y2="712.5" stroke="#5f3f26" stroke-opacity=".5" stroke-width="1.4"/>
<polygon points="1035.4,616.8 1208.3,578.2 1236.6,588.9 1054.6,631.9" fill="#986d44"/>
<line x1="1035.4" y1="616.8" x2="1054.6" y2="631.9" stroke="#5f3f26" stroke-opacity=".5" stroke-width="1.4"/>
<polygon points="1208.3,578.2 1541.7,503.7 1586.6,506.3 1236.6,588.9" fill="#9b7046"/>
<line x1="1208.3" y1="578.2" x2="1236.6" y2="588.9" stroke="#5f3f26" stroke-opacity=".5" stroke-width="1.4"/>
<polygon points="1541.7,503.7 1978.5,406.1 2041.2,398.9 1586.6,506.3" fill="#956a42"/>
<polygon points="475.3,768.7 771.6,698.7 777.2,723.2 463.7,801.7" fill="#a0754b"/>
<line x1="475.3" y1="768.7" x2="463.7" y2="801.7" stroke="#5f3f26" stroke-opacity=".5" stroke-width="1.4"/>
<polygon points="771.6,698.7 1069.6,628.4 1092.0,644.3 777.2,723.2" fill="#9e7349"/>
<line x1="771.6" y1="698.7" x2="777.2" y2="723.2" stroke="#5f3f26" stroke-opacity=".5" stroke-width="1.4"/>
<polygon points="1069.6,628.4 1391.6,552.3 1431.7,559.2 1092.0,644.3" fill="#966b43"/>
<line x1="1069.6" y1="628.4" x2="1092.0" y2="644.3" stroke="#5f3f26" stroke-opacity=".5" stroke-width="1.4"/>
<polygon points="1391.6,552.3 1707.5,477.7 1763.4,476.1 1431.7,559.2" fill="#916640"/>
<line x1="1391.6" y1="552.3" x2="1431.7" y2="559.2" stroke="#5f3f26" stroke-opacity=".5" stroke-width="1.4"/>
<polygon points="1707.5,477.7 2023.8,403.0 2092.2,393.7 1763.4,476.1" fill="#9a6f45"/>
<polygon points="329.2,835.4 719.8,737.6 722.5,766.8 307.7,877.5" fill="#a0754b"/>
<line x1="329.2" y1="835.4" x2="307.7" y2="877.5" stroke="#5f3f26" stroke-opacity=".5" stroke-width="1.4"/>
<polygon points="719.8,737.6 1046.3,655.8 1068.9,674.4 722.5,766.8" fill="#9a6f45"/>
<line x1="719.8" y1="737.6" x2="722.5" y2="766.8" stroke="#5f3f26" stroke-opacity=".5" stroke-width="1.4"/>
<polygon points="1046.3,655.8 1410.7,564.5 1454.6,571.5 1068.9,674.4" fill="#986d44"/>
<line x1="1046.3" y1="655.8" x2="1068.9" y2="674.4" stroke="#5f3f26" stroke-opacity=".5" stroke-width="1.4"/>
<polygon points="1410.7,564.5 1874.6,448.2 1942.4,441.4 1454.6,571.5" fill="#a0754b"/>
<line x1="1410.7" y1="564.5" x2="1454.6" y2="571.5" stroke="#5f3f26" stroke-opacity=".5" stroke-width="1.4"/>
<polygon points="286.7,883.1 672.2,780.3 672.0,815.3 260.8,932.6" fill="#916640"/>
<line x1="286.7" y1="883.1" x2="260.8" y2="932.6" stroke="#5f3f26" stroke-opacity=".5" stroke-width="1.4"/>
<polygon points="672.2,780.3 1026.3,685.8 1049.2,707.8 672.0,815.3" fill="#916640"/>
<line x1="672.2" y1="780.3" x2="672.0" y2="815.3" stroke="#5f3f26" stroke-opacity=".5" stroke-width="1.4"/>
<polygon points="1026.3,685.8 1460.8,569.9 1511.1,576.0 1049.2,707.8" fill="#936841"/>
<line x1="1026.3" y1="685.8" x2="1049.2" y2="707.8" stroke="#5f3f26" stroke-opacity=".5" stroke-width="1.4"/>
<polygon points="1460.8,569.9 1756.3,491.1 1823.4,486.9 1511.1,576.0" fill="#986d44"/>
<line x1="1460.8" y1="569.9" x2="1511.1" y2="576.0" stroke="#5f3f26" stroke-opacity=".5" stroke-width="1.4"/>
<polygon points="358.7,904.7 639.1,824.7 636.6,866.5 336.0,958.5" fill="#936841"/>
<line x1="358.7" y1="904.7" x2="336.0" y2="958.5" stroke="#5f3f26" stroke-opacity=".5" stroke-width="1.4"/>
<polygon points="639.1,824.7 1058.7,705.1 1085.7,728.8 636.6,866.5" fill="#936841"/>
<line x1="639.1" y1="824.7" x2="636.6" y2="866.5" stroke="#5f3f26" stroke-opacity=".5" stroke-width="1.4"/>
<polygon points="1058.7,705.1 1540.5,567.6 1599.8,571.3 1085.7,728.8" fill="#9b7046"/>
<line x1="1058.7" y1="705.1" x2="1085.7" y2="728.8" stroke="#5f3f26" stroke-opacity=".5" stroke-width="1.4"/>
<polygon points="1540.5,567.6 2007.1,434.6 2092.3,420.4 1599.8,571.3" fill="#936841"/>
<polygon points="410.3,935.8 736.3,835.9 741.0,879.5 389.7,995.8" fill="#9a6f45"/>
<line x1="410.3" y1="935.8" x2="389.7" y2="995.8" stroke="#5f3f26" stroke-opacity=".5" stroke-width="1.4"/>
<polygon points="736.3,835.9 992.5,757.4 1016.7,788.2 741.0,879.5" fill="#956a42"/>
<line x1="736.3" y1="835.9" x2="741.0" y2="879.5" stroke="#5f3f26" stroke-opacity=".5" stroke-width="1.4"/>
<polygon points="992.5,757.4 1388.9,635.9 1442.6,647.2 1016.7,788.2" fill="#966b43"/>
<line x1="992.5" y1="757.4" x2="1016.7" y2="788.2" stroke="#5f3f26" stroke-opacity=".5" stroke-width="1.4"/>
<polygon points="1388.9,635.9 1919.9,473.2 2008.5,459.9 1442.6,647.2" fill="#a0754b"/>
<line x1="1388.9" y1="635.9" x2="1442.6" y2="647.2" stroke="#5f3f26" stroke-opacity=".5" stroke-width="1.4"/>
<polygon points="759.7,873.3 1175.8,735.5 1217.3,760.9 766.9,923.0" fill="#9b7046"/>
<line x1="759.7" y1="873.3" x2="766.9" y2="923.0" stroke="#5f3f26" stroke-opacity=".5" stroke-width="1.4"/>
<polygon points="1175.8,735.5 1783.5,534.4 1871.7,525.3 1217.3,760.9" fill="#9b7046"/>
<line x1="1175.8" y1="735.5" x2="1217.3" y2="760.9" stroke="#5f3f26" stroke-opacity=".5" stroke-width="1.4"/>
<polygon points="864.3,888.0 1244.4,751.2 1296.2,776.4 881.7,939.8" fill="#9e7349"/>
<line x1="864.3" y1="888.0" x2="881.7" y2="939.8" stroke="#5f3f26" stroke-opacity=".5" stroke-width="1.4"/>
<polygon points="1244.4,751.2 1863.8,528.2 1967.1,511.8 1296.2,776.4" fill="#916640"/>
<line x1="1244.4" y1="751.2" x2="1296.2" y2="776.4" stroke="#5f3f26" stroke-opacity=".5" stroke-width="1.4"/>
<polygon points="913.6,927.3 1309.7,771.0 1373.7,795.7 938.0,985.8" fill="#976c43"/>
<line x1="913.6" y1="927.3" x2="938.0" y2="985.8" stroke="#5f3f26" stroke-opacity=".5" stroke-width="1.4"/>
<polygon points="1309.7,771.0 1870.8,549.8 1986.3,528.6 1373.7,795.7" fill="#956a42"/>
<line x1="1309.7" y1="771.0" x2="1373.7" y2="795.7" stroke="#5f3f26" stroke-opacity=".5" stroke-width="1.4"/>
<polygon points="671.1,1102.2 1307.9,824.4 1379.6,854.6 670.7,1200.4" fill="#976c43"/>
<line x1="671.1" y1="1102.2" x2="670.7" y2="1200.4" stroke="#5f3f26" stroke-opacity=".5" stroke-width="1.4"/>
<polygon points="1307.9,824.4 1901.2,565.7 2034.2,535.3 1379.6,854.6" fill="#9d7248"/>
<line x1="1307.9" y1="824.4" x2="1379.6" y2="854.6" stroke="#5f3f26" stroke-opacity=".5" stroke-width="1.4"/>
<polygon points="655.7,1207.7 1435.0,827.6 1532.6,847.9 653.2,1334.4" fill="#9d7248"/>
<line x1="655.7" y1="1207.7" x2="653.2" y2="1334.4" stroke="#5f3f26" stroke-opacity=".5" stroke-width="1.4"/>
<polygon points="1435.0,827.6 1914.1,593.9 2067.4,552.1 1532.6,847.9" fill="#9a6f45"/>
<line x1="1435.0" y1="827.6" x2="1532.6" y2="847.9" stroke="#5f3f26" stroke-opacity=".5" stroke-width="1.4"/>
<polygon points="1418.8,910.8 2144.4,509.4 2345.4,417.5 1529.8,938.7" fill="#976c43"/>
<line x1="1418.8" y1="910.8" x2="1529.8" y2="938.7" stroke="#5f3f26" stroke-opacity=".5" stroke-width="1.4"/>
<polygon points="1572.4,911.5 2407.2,378.0 2926.5,4.4 1730.5,908.8" fill="#936841"/>
<polygon points="1119.9,1370.6 2250.8,515.4 2549.2,293.3 1217.6,1526.5" fill="#916640"/>
<line x1="1119.9" y1="1370.6" x2="1217.6" y2="1526.5" stroke="#5f3f26" stroke-opacity=".5" stroke-width="1.4"/>
<line x1="600" y1="509.7" x2="1720" y2="375.7" stroke="#5f3f26" stroke-opacity="0.08" stroke-width="1.3"/>
<line x1="600" y1="516.7" x2="1720" y2="378.7" stroke="#5f3f26" stroke-opacity="0.08" stroke-width="1.3"/>
<line x1="600" y1="524.2" x2="1720" y2="382.0" stroke="#5f3f26" stroke-opacity="0.09" stroke-width="1.3"/>
<line x1="600" y1="532.2" x2="1720" y2="385.4" stroke="#5f3f26" stroke-opacity="0.09" stroke-width="1.3"/>
<line x1="600" y1="540.6" x2="1720" y2="389.0" stroke="#5f3f26" stroke-opacity="0.10" stroke-width="1.3"/>
<line x1="600" y1="549.7" x2="1720" y2="393.0" stroke="#5f3f26" stroke-opacity="0.11" stroke-width="1.3"/>
<line x1="600" y1="559.4" x2="1720" y2="397.1" stroke="#5f3f26" stroke-opacity="0.11" stroke-width="1.3"/>
<line x1="600" y1="569.8" x2="1720" y2="401.6" stroke="#5f3f26" stroke-opacity="0.12" stroke-width="1.3"/>
<line x1="600" y1="581.0" x2="1720" y2="406.4" stroke="#5f3f26" stroke-opacity="0.13" stroke-width="1.3"/>
<line x1="600" y1="593.0" x2="1720" y2="411.7" stroke="#5f3f26" stroke-opacity="0.14" stroke-width="1.3"/>
<line x1="600" y1="606.1" x2="1720" y2="417.3" stroke="#5f3f26" stroke-opacity="0.15" stroke-width="1.3"/>
<line x1="600" y1="620.2" x2="1720" y2="423.4" stroke="#5f3f26" stroke-opacity="0.17" stroke-width="1.3"/>
<line x1="600" y1="635.7" x2="1720" y2="430.0" stroke="#5f3f26" stroke-opacity="0.18" stroke-width="1.3"/>
<line x1="600" y1="652.5" x2="1720" y2="437.3" stroke="#5f3f26" stroke-opacity="0.20" stroke-width="1.3"/>
<line x1="600" y1="671.0" x2="1720" y2="445.3" stroke="#5f3f26" stroke-opacity="0.22" stroke-width="1.3"/>
<line x1="600" y1="691.4" x2="1720" y2="454.1" stroke="#5f3f26" stroke-opacity="0.25" stroke-width="1.3"/>
<line x1="600" y1="714.1" x2="1720" y2="463.9" stroke="#5f3f26" stroke-opacity="0.27" stroke-width="1.3"/>
<line x1="600" y1="739.3" x2="1720" y2="474.8" stroke="#5f3f26" stroke-opacity="0.31" stroke-width="1.3"/>
<line x1="600" y1="767.6" x2="1720" y2="487.0" stroke="#5f3f26" stroke-opacity="0.32" stroke-width="1.3"/>
<line x1="600" y1="799.5" x2="1720" y2="500.7" stroke="#5f3f26" stroke-opacity="0.32" stroke-width="1.3"/>
<line x1="600" y1="835.9" x2="1720" y2="516.4" stroke="#5f3f26" stroke-opacity="0.32" stroke-width="1.3"/>
<line x1="600" y1="877.7" x2="1720" y2="534.5" stroke="#5f3f26" stroke-opacity="0.32" stroke-width="1.3"/>
<line x1="600" y1="926.1" x2="1720" y2="555.4" stroke="#5f3f26" stroke-opacity="0.32" stroke-width="1.3"/>
<line x1="600" y1="983.1" x2="1720" y2="580.0" stroke="#5f3f26" stroke-opacity="0.32" stroke-width="1.3"/>
<line x1="600" y1="1051.0" x2="1720" y2="609.2" stroke="#5f3f26" stroke-opacity="0.32" stroke-width="1.3"/>
<line x1="600" y1="1133.2" x2="1720" y2="644.7" stroke="#5f3f26" stroke-opacity="0.32" stroke-width="1.3"/>
<line x1="600" y1="1234.9" x2="1720" y2="688.6" stroke="#5f3f26" stroke-opacity="0.32" stroke-width="1.3"/>
<line x1="600" y1="1363.8" x2="1720" y2="744.2" stroke="#5f3f26" stroke-opacity="0.32" stroke-width="1.3"/>
<line x1="600" y1="1532.8" x2="1720" y2="817.1" stroke="#5f3f26" stroke-opacity="0.32" stroke-width="1.3"/>
<line x1="600" y1="1763.8" x2="1720" y2="916.8" stroke="#5f3f26" stroke-opacity="0.32" stroke-width="1.3"/>
<g transform="rotate(-15 1160 660)"><rect x="380" y="250" width="1600" height="900" filter="url(#grainD)"/><rect x="380" y="250" width="1600" height="900" filter="url(#grainL)"/></g>
</g>
<!-- island -->
<polygon points="940,276 1150,268 1313,264 1313,268 1448,271 1605,276.3 1680,279.5 1331,291 1152,298 942,282" fill="url(#topface)"/>
<polygon points="942,281 1152,298 1152,318 947,289" fill="url(#lband)"/>
<polygon points="1152,298 1331,291 1680,279.5 1677,294 1380,307.2 1331,312.2 1152,319.4" fill="#464646"/>
<polygon points="947,289 1152,318 1154.5,721 1128,731.5 1033,638 985,586 973.4,576 971,555 962,528 958,462" fill="url(#leftface)"/>
<polygon points="1127.8,699.6 1144.3,707.9 1144.3,725.6 1127.8,731.5" fill="#9e9f9e"/><path d="M1144.6,626 V707" stroke="#a3a4a3" stroke-width="1.4"/>
<polygon points="1147,318.4 1331,311 1380,306 1677,293 1647,442 1628,574 1594,590 1538,600.5 1430,640 1308,678 1147,724.6" fill="#969390"/>
<!-- open shelf -->
<polygon points="1459,310.5 1561,305.5 1543.7,449 1446,466" fill="url(#ydark)"/>
<polygon points="1448,429 1543.7,449 1446,466" fill="#ffe500"/>
<polygon points="1444.7,480.5 1541.6,463.3 1525.2,593.2 1431.5,620.3" fill="url(#ydark)"/>
<polygon points="1436.8,559.6 1525.2,593.2 1431.5,620.3" fill="#ffe500"/>
<polygon points="1564.8,301 1575.4,299.6 1538.4,600.5 1529.2,598" fill="#dcdcdc"/>
<path d="M1569,312 L1533,590" stroke="#8f8f8f" stroke-width="2.4" stroke-linecap="round" stroke-dasharray="0.1 12.5" fill="none" shape-rendering="auto"/>
<!-- seams -->
<path d="M1321,313 L1303,672" stroke="#cfcfcf" stroke-width="1.5" stroke-dasharray="26 8"/>
<path d="M1142.8,320 L1142.8,428" stroke="#a0a1a1" stroke-width="1.6"/>
<path d="M1147,531 L1444,478" stroke="#fff" stroke-width="2.2" stroke-dasharray="6.5 3.3"/>
<path d="M1551.6,456.7 L1644,441.6" stroke="#fff" stroke-width="2.2" stroke-dasharray="6.5 3.3"/>
<path d="M1676,307 h32" stroke="#444" stroke-width="1.6" stroke-dasharray="7 3 2 3"/>
<!-- knobs -->
<g fill="#050505" stroke="#050505" stroke-width="1.5" stroke-linejoin="round" shape-rendering="auto">
<polygon points="1250.4,330.8 1248.9,336.5 1244.1,340.1 1237.8,340.5 1233.1,336.5 1230.8,330.8 1234.6,326.2 1238.2,322.3 1244.2,321.1 1248.7,325.3"/>
<polygon points="1406.1,322.1 1402.8,325.9 1399.4,328.9 1394.5,328.5 1390.2,326.4 1388.5,322.1 1391.2,318.4 1394.6,315.8 1399.3,315.6 1404.4,317.3"/>
<polygon points="1244.7,530.8 1241.8,535.1 1238.6,539.1 1233.5,537.7 1228.9,535.7 1228.4,530.8 1230.1,526.7 1233.0,522.3 1238.1,523.8 1241.9,526.5"/>
<polygon points="1392.3,503.6 1390.4,508.3 1385.8,510.1 1380.9,511.4 1377.3,507.9 1375.6,503.6 1377.9,499.7 1380.9,495.8 1386.1,496.3 1390.6,498.8"/>
<polygon points="1635.8,308.6 1633.4,312.0 1630.1,314.1 1626.0,313.8 1622.9,311.8 1621.8,308.6 1622.6,305.2 1625.8,302.7 1629.9,303.6 1634.0,304.8"/>
<polygon points="1611.5,460.4 1610.3,463.8 1607.7,466.7 1603.7,466.1 1600.9,463.8 1599.5,460.4 1600.3,456.6 1603.9,455.4 1607.8,453.8 1609.9,457.3"/>
</g>
<rect x="1019" y="344" width="3" height="10" fill="#222"/>
<!-- yellow outline -->
<g stroke="#ff0" fill="none" stroke-linejoin="round">
<path d="M1019,282 L1153,298 L1331,291" stroke-width="3"/>
<path d="M1019,281.5 L1189,278.5 L1331,291" stroke-width="1.5"/>
<path d="M1019,282 L1034,638" stroke-width="3"/>
<path d="M1153.5,298 L1154.6,757.6" stroke-width="4"/>
<path d="M1330.6,291 L1312,707" stroke-width="4"/>
<path d="M1154.6,757.6 L1310.5,707" stroke-width="3"/>
<path d="M1154.6,757.6 L1128.3,731" stroke-width="2.4"/>
<path d="M1276.8,686 L1307,706.5" stroke-width="1.6"/>
</g>
<!-- translucent arrows -->
<g fill="#fff" shape-rendering="auto">
<polygon points="925.8,687.5 981.7,674.2 984.2,705 928.3,715.8" fill-opacity=".32"/>
<polygon points="937,690 973,682 984,704 940,712" fill-opacity=".3"/>
<path d="M940,711.7 Q962,745 1000,757 L1033,720 Q1002,718 984,703 Z" fill-opacity=".33"/>
<polygon points="1000,738.3 1042.5,712.5 1054.2,753.3 1002.5,771.7" fill-opacity=".33"/>
<polygon points="1000,738.3 1033,720 1036,752 1002.5,771.7" fill-opacity=".28"/>
<polygon points="982.5,596 993,587 1007,581 1019,591 1020,616 1000,608 982.5,608" fill-opacity=".5"/>
<polygon points="1258,754 1272.6,716 1309,744.5 1310,773.6" fill-opacity=".3"/>
<polygon points="1279,722 1309,744.5 1310,773.6 1279,752" fill-opacity=".3"/>
<path d="M1279,722 Q1318,712 1337,689 L1380,696 L1376,723 Q1350,750 1309,760 Z" fill-opacity=".34"/>
<polygon points="1336.5,677 1393,693 1390.7,721.5 1376,718 1337,689" fill-opacity=".3"/>
<polygon points="1337,689 1380,696 1376,723 1340,712" fill-opacity=".25"/>
</g>
</svg>
<svg class="abs" style="left:0;top:0" width="2304" height="1440" viewBox="0 0 2304 1440">
<rect x="795.8" y="852.6" width="66.4" height="66.8" fill="#7a7d7d"/>
<rect x="678.6" y="873" width="34" height="31.8" stroke="#3a3a3a" fill="none" stroke-width="2.6" stroke-linejoin="round" stroke-linecap="round" stroke-linejoin="miter"/>
<path stroke="#3a3a3a" fill="none" stroke-width="2.6" stroke-linejoin="round" stroke-linecap="round" d="M762.6,867.6 L781.6,876.4 V899.6 L762.6,909.4 L743.6,899.6 V876.4 Z M743.6,876.4 L762.6,885.6 L781.6,876.4 M762.6,885.6 V909.4"/>
<path d="M828.9,866.4 L848.6,875.6 V900 L828.9,909.8 L809.2,900 V875.6 Z" fill="#fff" stroke="#fff" stroke-width="2" stroke-linejoin="round"/>
<path d="M828.9,869.4 L844.6,876.6 L828.9,884 L813.2,876.6 Z" fill="#7a7d7d"/><path d="M831,887.6 L846.4,880 V898.8 L831,906.4 Z" fill="#7a7d7d"/>
<path stroke="#3a3a3a" fill="none" stroke-width="2.6" stroke-linejoin="round" stroke-linecap="round" d="M876,884 V875.6 h9 M876,897.6 V906 h9 M907.6,897.6 V906 h-9"/>
<circle cx="903.6" cy="879.4" r="11.4" stroke="#3a3a3a" fill="none" stroke-width="2.6" stroke-linejoin="round" stroke-linecap="round"/><path stroke="#3a3a3a" fill="none" stroke-width="2.6" stroke-linejoin="round" stroke-linecap="round" d="M912,887.4 L921.6,896"/><path d="M897.8,879.4 h11.6 M903.6,873.6 v11.6" stroke="#3a3a3a" stroke-width="2.2"/>
<circle cx="959" cy="884.2" r="17" stroke="#3a3a3a" fill="none" stroke-width="2.6" stroke-linejoin="round" stroke-linecap="round"/><path stroke="#3a3a3a" fill="none" stroke-width="2.6" stroke-linejoin="round" stroke-linecap="round" d="M971.4,896.2 L985,909.4"/><path d="M953,884.2 h12 M959,878.2 v12" stroke="#3a3a3a" stroke-width="2.4"/>
<circle cx="1025.8" cy="884.2" r="17" stroke="#3a3a3a" fill="none" stroke-width="2.6" stroke-linejoin="round" stroke-linecap="round"/><path stroke="#3a3a3a" fill="none" stroke-width="2.6" stroke-linejoin="round" stroke-linecap="round" d="M1038.2,896.2 L1051.8,909.4"/><path d="M1019.8,884.2 h12" stroke="#3a3a3a" stroke-width="2.4"/>
<path stroke="#3a3a3a" fill="none" stroke-width="2.6" stroke-linejoin="round" stroke-linecap="round" stroke-linejoin="miter" d="M1075.6,888.6 L1095.4,869 L1115.6,888.6 h-6.6 V905.6 h-9 V894.6 h-8.6 V905.6 h-9.4 V888.6 Z"/>
<path stroke="#3a3a3a" fill="none" stroke-width="2.6" stroke-linejoin="round" stroke-linecap="round" d="M1144.6,870.8 A17.8,17.8 0 1 0 1173.6,886.6"/><path d="M1165,885.4 L1174.6,874.8 L1184.4,885.4 Z" fill="#222"/>
<path stroke="#3a3a3a" fill="none" stroke-width="2.6" stroke-linejoin="round" stroke-linecap="round" d="M1252.4,884.6 Q1233,901 1213,888"/><path d="M1206,881.6 L1219.6,882.4 L1207.4,895.4 Z" fill="#222"/>
<path stroke="#3a3a3a" fill="none" stroke-width="2.6" stroke-linejoin="round" stroke-linecap="round" d="M1272.6,884.6 Q1292,901 1311,888"/><path d="M1318,881.6 L1304.4,882.4 L1316.6,895.4 Z" fill="#222"/>
<path stroke="#3a3a3a" fill="none" stroke-width="2.6" stroke-linejoin="round" stroke-linecap="round" d="M1365,910 Q1346,888 1362,872"/><path d="M1355.4,866.4 L1368.6,866 L1368,879.4 Z" fill="#222"/>
<path stroke="#3a3a3a" fill="none" stroke-width="2.6" stroke-linejoin="round" stroke-linecap="round" d="M1424.6,864.4 Q1442,884 1431,902"/><path d="M1422.4,897.4 L1435.8,908.8 L1422.8,909.8 Z" fill="#222"/>
<path stroke="#3a3a3a" fill="none" stroke-width="2.6" stroke-linejoin="round" stroke-linecap="round" stroke-width="2.3" d="M1486.5,872.8 L1494.3,866.7 L1512.5,871.1 L1504.7,877.6 Z M1486.5,872.8 V897.1 L1504.3,902.7 L1512.5,896.7 V871.1 M1504.7,877.6 L1504.3,902.7"/>
<path stroke="#3a3a3a" fill="none" stroke-width="2.6" stroke-linejoin="round" stroke-linecap="round" stroke-width="2.3" d="M1476,891 C1472,905 1486,913 1497,912 C1510,911 1519,903 1518.6,894"/><path d="M1469.8,888 L1478,883.4 L1482.4,892.4 Z" fill="#222"/>
<path stroke="#3a3a3a" fill="none" stroke-width="2.6" stroke-linejoin="round" stroke-linecap="round" stroke-width="2.3" d="M1538.1,878 L1554.2,872.8 L1554.6,900.1 L1538.1,908 Z M1554.2,872.8 L1563.7,866.3 L1585,871.9 L1576.3,878.9 Z M1576.3,878.9 V908 L1554.6,900.1 M1585,871.9 V898.4 L1576.3,908 M1561.1,875.4 V893.2 L1576.3,897.5 M1561.1,893.2 L1554.6,900.1"/>
<path stroke="#3a3a3a" fill="none" stroke-width="2.6" stroke-linejoin="round" stroke-linecap="round" stroke-width="2.4" d="M1612.3,871.6 h31 M1624.1,871.6 v-4.8 h8.2 v4.8 M1614.9,875.8 L1617.1,906.2 h22.1 L1641,875.8 M1624.1,880.4 v18.8 M1631.5,880.4 v18.8"/>
</svg>
</body></html>
